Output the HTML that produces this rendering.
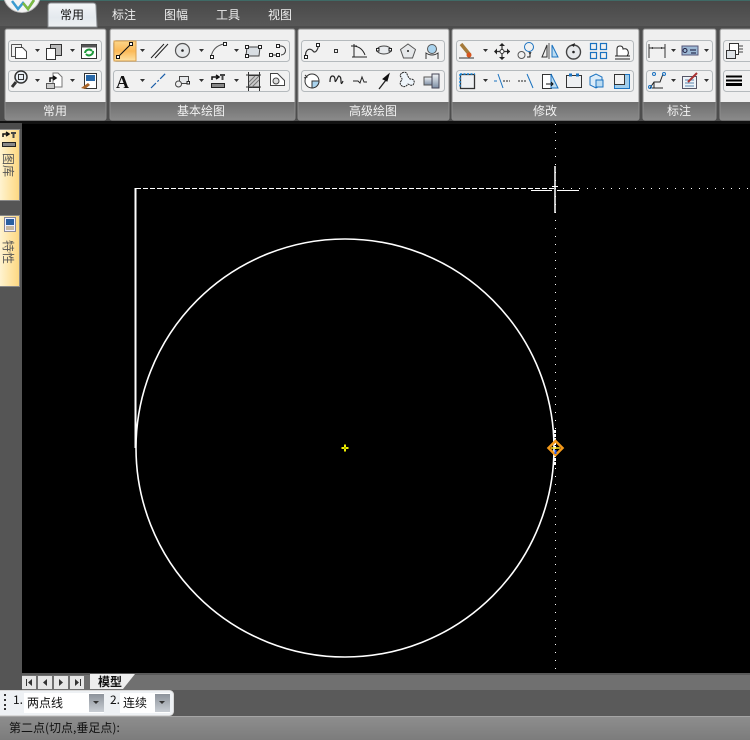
<!DOCTYPE html>
<html><head><meta charset="utf-8">
<style>
html,body{margin:0;padding:0;background:#000;width:750px;height:740px;overflow:hidden}
svg{display:block}
text{font-family:"WenQuanYi Zen Hei","Noto Sans CJK SC","Liberation Sans",sans-serif;font-size:12px}
.k{fill:none;stroke:#222;stroke-width:1}
.b{fill:none;stroke:#1a72c0;stroke-width:1.200}
.g{fill:none;stroke:#555;stroke-width:1}
.s{fill:#fff;stroke:#222;stroke-width:1}
.arr{fill:#333}
</style></head><body>
<svg width="750" height="740" viewBox="0 0 750 740" xmlns="http://www.w3.org/2000/svg">
<defs>
<linearGradient id="top" x1="0" y1="0" x2="0" y2="1"><stop offset="0" stop-color="#484848"/><stop offset="1" stop-color="#585858"/></linearGradient>
<linearGradient id="tab" x1="0" y1="0" x2="0" y2="1"><stop offset="0" stop-color="#f4f6f8"/><stop offset=".6" stop-color="#e4e9ee"/><stop offset="1" stop-color="#eef1f3"/></linearGradient>
<linearGradient id="lab" x1="0" y1="0" x2="0" y2="1"><stop offset="0" stop-color="#6e6e6e"/><stop offset="1" stop-color="#8a8a8a"/></linearGradient>
<linearGradient id="hot" x1="0" y1="0" x2="0" y2="1"><stop offset="0" stop-color="#fbd58a"/><stop offset=".5" stop-color="#fbb957"/><stop offset="1" stop-color="#fde3a6"/></linearGradient>
<linearGradient id="yel" x1="0" y1="0" x2="1" y2="0"><stop offset="0" stop-color="#fff6d8"/><stop offset="1" stop-color="#fdd77f"/></linearGradient>
<linearGradient id="st" x1="0" y1="0" x2="0" y2="1"><stop offset="0" stop-color="#8e8e8e"/><stop offset="1" stop-color="#7c7c7c"/></linearGradient>
<linearGradient id="btn" x1="0" y1="0" x2="0" y2="1"><stop offset="0" stop-color="#8d939b"/><stop offset="1" stop-color="#c9ced4"/></linearGradient>
<linearGradient id="cyl" x1="0" y1="0" x2="0" y2="1"><stop offset="0" stop-color="#f2f5f8"/><stop offset="1" stop-color="#7d8ea4"/></linearGradient>
</defs>

<!-- ribbon background -->
<rect x="0" y="0" width="750" height="123" fill="#2f2f2f"/>
<rect x="0" y="0" width="750" height="26" fill="url(#top)"/>
<rect x="0" y="0" width="750" height="1" fill="#3f6a66"/>
<rect x="0" y="26" width="750" height="95" fill="#4d4d4d"/>
<rect x="0" y="121" width="750" height="3" fill="#111"/>

<!-- logo -->
<circle cx="22" cy="-6" r="18.500" fill="#f4f4f4" stroke="#bbb"/>
<path d="M12 1 L18 9 L23 3 L28 9 L34 0" fill="none" stroke="#3b9bd0" stroke-width="2.500"/>
<path d="M23 3 L28 9 L34 0" fill="none" stroke="#7db940" stroke-width="2.500"/>

<!-- tabs -->
<path d="M48 27 L48 6 Q48 3 51 3 L93 3 Q96 3 96 6 L97 27 Z" fill="url(#tab)" stroke="#8b8f93"/>
<text x="60" y="19" fill="#111">常用</text>
<text x="112" y="19" fill="#eee">标注</text>
<text x="164" y="19" fill="#eee">图幅</text>
<text x="216" y="19" fill="#eee">工具</text>
<text x="268" y="19" fill="#eee">视图</text>

<!-- panels -->
<g>
<rect x="5" y="29" width="101" height="91" rx="2" fill="#efefef" stroke="#8c8c8c"/><rect x="5.500" y="102" width="100" height="18" fill="url(#lab)"/>
<rect x="110" y="29" width="185" height="91" rx="2" fill="#efefef" stroke="#8c8c8c"/><rect x="110.500" y="102" width="184" height="18" fill="url(#lab)"/>
<rect x="298" y="29" width="151" height="91" rx="2" fill="#efefef" stroke="#8c8c8c"/><rect x="298.500" y="102" width="150" height="18" fill="url(#lab)"/>
<rect x="452" y="29" width="187" height="91" rx="2" fill="#efefef" stroke="#8c8c8c"/><rect x="452.500" y="102" width="186" height="18" fill="url(#lab)"/>
<rect x="643" y="29" width="73" height="91" rx="2" fill="#efefef" stroke="#8c8c8c"/><rect x="643.500" y="102" width="72" height="18" fill="url(#lab)"/>
<rect x="720" y="29" width="40" height="91" rx="2" fill="#efefef" stroke="#8c8c8c"/><rect x="720.500" y="102" width="40" height="18" fill="url(#lab)"/>
</g>
<g fill="#f2f2f2">
<text x="43" y="115">常用</text>
<text x="177" y="115">基本绘图</text>
<text x="349" y="115">高级绘图</text>
<text x="533" y="115">修改</text>
<text x="667" y="115">标注</text>
</g>

<!-- button groups -->
<g fill="#f1f1f1" stroke="#b5babd">
<rect x="8.500" y="40.500" width="93" height="21" rx="3"/><rect x="8.500" y="70.500" width="93" height="21" rx="3"/>
<rect x="113.500" y="40.500" width="176" height="21" rx="3"/><rect x="113.500" y="70.500" width="176" height="21" rx="3"/>
<rect x="301.500" y="40.500" width="143" height="21" rx="3"/><rect x="301.500" y="70.500" width="143" height="21" rx="3"/>
<rect x="456.500" y="40.500" width="177" height="21" rx="3"/><rect x="456.500" y="70.500" width="177" height="21" rx="3"/>
<rect x="646.500" y="40.500" width="66" height="21" rx="3"/><rect x="646.500" y="70.500" width="66" height="21" rx="3"/>
<rect x="723.500" y="40.500" width="40" height="21" rx="3"/><rect x="723.500" y="70.500" width="40" height="21" rx="3"/>
</g>
<!-- dropdown arrows -->
<g class="arr">
<path d="M35 49h5l-2.500 3z"/><path d="M70 49h5l-2.500 3z"/><path d="M35 79h5l-2.500 3z"/><path d="M70 79h5l-2.500 3z"/>
<path d="M140 49h5l-2.500 3z"/><path d="M199 49h5l-2.500 3z"/><path d="M234 49h5l-2.500 3z"/>
<path d="M140 79h5l-2.500 3z"/><path d="M199 79h5l-2.500 3z"/><path d="M234 79h5l-2.500 3z"/>
<path d="M483 49h5l-2.500 3z"/><path d="M483 79h5l-2.500 3z"/>
<path d="M671 49h5l-2.500 3z"/><path d="M704 49h5l-2.500 3z"/><path d="M671 79h5l-2.500 3z"/><path d="M704 79h5l-2.500 3z"/>
</g>

<!-- panel 1 icons -->
<path class="g" d="M11.500 44.500h10v3M11.500 44.500v12h4"/><path d="M15.500 47.500h7l4 4v7h-11z" fill="#fff" stroke="#444"/>
<path d="M46.500 48.500h9v11h-9z" fill="#fff" stroke="#333"/><path d="M50.500 44.500h11v11h-6v-7h-5z" fill="#bbb" stroke="#333"/>
<rect x="81.500" y="44.500" width="15" height="14" fill="#fff" stroke="#333"/><rect x="81.500" y="44.500" width="15" height="3" fill="#555"/><path d="M85 53a4 4 0 0 1 7-2M93 51a4 4 0 0 1-7 3" fill="none" stroke="#1e9a3a" stroke-width="2"/>
<circle cx="21" cy="77" r="6" fill="#e8eef4" stroke="#333" stroke-width="1.500"/><rect x="18.500" y="74.500" width="5" height="5" fill="none" stroke="#333"/><path d="M16 82l-4 5" stroke="#333" stroke-width="3"/>
<path d="M53 73h5l4 4v10h-9z" fill="#fff" stroke="#777"/><rect x="46.500" y="83.500" width="8" height="5" fill="#ccc" stroke="#555"/><path d="M50 82v-4h5M53 76l3 2-3 2" fill="none" stroke="#111" stroke-width="1.500"/>
<rect x="84.500" y="73.500" width="12" height="15" fill="#fff" stroke="#333"/><rect x="86" y="75" width="9" height="6" fill="#2868a8"/><path d="M81 88l7-5 2 2-5 4z" fill="#a86428"/>

<!-- panel 2 icons row 1 -->
<rect x="114" y="41" width="22" height="20" fill="url(#hot)" stroke="#d9a04f"/>
<path d="M118 57L131 44" stroke="#111"/><rect x="116.500" y="55.500" width="3" height="3" fill="#fff" stroke="#111"/><rect x="129.500" y="42.500" width="3" height="3" fill="#fff" stroke="#111"/>
<path d="M151 58L164 44M155 58L168 44" stroke="#222" fill="none"/>
<circle cx="182.500" cy="50.500" r="7" fill="#e6e8ea" stroke="#555" stroke-width="1.200"/><circle cx="182.500" cy="50.500" r="1.300" fill="#222"/>
<path d="M211 57Q213 46 224 44" fill="none" stroke="#555"/><rect x="210.500" y="55.500" width="3" height="3" class="s"/><rect x="223.500" y="42.500" width="3" height="3" class="s"/>
<path d="M247 47h13l-1 9h-13z" fill="#d8dde2" stroke="#444"/><rect x="245.500" y="45.500" width="3" height="3" class="s"/><rect x="258.500" y="45.500" width="3" height="3" class="s"/><rect x="245.500" y="54.500" width="3" height="3" class="s"/>
<path d="M271 55h8M279 46h2a4.500 4.500 0 0 1 0 9" fill="none" stroke="#333"/><rect x="269.500" y="53.500" width="3" height="3" class="s"/><rect x="276.500" y="53.500" width="3" height="3" class="s"/><rect x="276.500" y="44.500" width="3" height="3" class="s"/>
<!-- row 2 -->
<text x="116" y="88" style="font-family:'Liberation Serif',serif;font-size:18px;font-weight:bold" fill="#111">A</text>
<path d="M151 88L166 73" stroke="#1a5da8" stroke-width="1.200" stroke-dasharray="7 2 2 2"/>
<rect x="179.500" y="76.500" width="9" height="7" fill="#e6e8ea" stroke="#444"/><circle cx="178.500" cy="84" r="3" fill="#eee" stroke="#444"/><rect x="187" y="81.500" width="2.500" height="2.500" class="s"/>
<path d="M212 80v-3h6M216 75l3 2-3 2" fill="none" stroke="#111" stroke-width="1.500"/><path d="M220 75h5M222.500 75v5" stroke="#444" stroke-width="2"/><rect x="211.500" y="83.500" width="13" height="4" fill="#888" stroke="#222"/>
<rect x="248.500" y="75.500" width="11" height="12" fill="#ccc" stroke="#333"/><path d="M246 75h15M246 87h15M248.500 72v19M259.500 72v19" stroke="#333"/><path d="M249 82l6-6M252 87l7-7M249 86l10-10" stroke="#777"/>
<path d="M270.500 73.500h7l7 7v5h-14z" fill="#fff" stroke="#444"/><circle cx="276" cy="81" r="3" fill="#ddd" stroke="#444"/>

<!-- panel 3 icons row 1 -->
<path d="M305.500 57C305 48 311 48 313 51C315 54 318 50 318.500 45" fill="none" stroke="#333" stroke-width="1.200"/><rect x="304.500" y="55.500" width="3" height="3" class="s"/><rect x="316.500" y="43.500" width="3" height="3" class="s"/>
<rect x="334.500" y="49.500" width="3" height="3" fill="none" stroke="#333"/>
<path d="M354 44v13h13M354 46Q362 47 365 55" fill="none" stroke="#222"/><path d="M351 46h6M352 57h3" stroke="#222"/>
<ellipse cx="384" cy="50" rx="7" ry="4" fill="#e8ebee" stroke="#444"/><rect x="376.500" y="48.500" width="2.500" height="2.500" class="s"/><rect x="389" y="48.500" width="2.500" height="2.500" class="s"/>
<path d="M408 44l7.500 5.500-3 8.500h-9l-3-8.500z" fill="#e6e8ea" stroke="#555"/><circle cx="408" cy="51" r="1" fill="#222"/>
<circle cx="432" cy="49" r="4.500" fill="#a9d3ee" stroke="#555"/><path d="M426 59v-6q3 2 6 2t6-2v6" fill="none" stroke="#333"/>
<!-- row 2 -->
<circle cx="312" cy="81" r="7" fill="#fff" stroke="#333"/><path d="M312 81h7a7 7 0 0 1-7 7z" fill="#a9d3ee" stroke="#333"/><path d="M305 75l2 2-3 1" fill="none" stroke="#333"/>
<path d="M330 82q0-6 2.500-6t2.500 4q0 3 1.500 0t2-4q2.500 0 2.500 5t2 0" fill="none" stroke="#222" stroke-width="1.200"/>
<path d="M353 81h5l2 2 2-6 2 5h3" fill="none" stroke="#222"/>
<path d="M379 89L386 80" stroke="#222" stroke-width="1.300"/><path d="M383 79l6-5-2 7z" fill="#111" stroke="#111"/>
<path d="M402 73q4-2 5 1t3 5q5 0 4 4t-6 1q-3 4-6 2t-1-5q2-2 0-4t1-4z" fill="#eef5fb" stroke="#222" stroke-dasharray="2 .7"/>
<path d="M424 77h8v8h-8z" fill="url(#cyl)" stroke="#555"/><path d="M432 74h7v14h-7z" fill="url(#cyl)" stroke="#445"/>

<!-- panel 4 icons row 1 -->
<path d="M461 44l9 11" stroke="#a57a3a" stroke-width="3.500"/><circle cx="469" cy="55" r="2.500" fill="#d9541c"/><path d="M459 58h15" stroke="#333"/>
<path d="M502 44v15M495 51.500h15" stroke="#333" stroke-width="1.200"/><path d="M502 43l-3 3h6zM502 60l-3-3h6zM494 51.500l3-3v6zM510 51.500l-3-3v6z" fill="#222"/><circle cx="502" cy="51.500" r="2" fill="#fff" stroke="#333"/>
<circle cx="529" cy="47" r="4.500" fill="none" stroke="#1a72c0"/><circle cx="521.500" cy="55" r="3.500" fill="none" stroke="#555"/><path d="M527 57h3v-3M529 52l1 2 1-2" fill="none" stroke="#222"/>
<path d="M549 43v16" stroke="#555"/><path d="M547 45v12h-5z" fill="none" stroke="#333"/><path d="M552 45l6 12h-6z" fill="#bcdcf2" stroke="#1a72c0"/>
<circle cx="573.500" cy="52" r="7" fill="#e6e8ea" stroke="#444" stroke-width="1.400"/><circle cx="573.500" cy="52" r="1.300" fill="#222"/><path d="M571 45l4-2-1 4z" fill="#222"/>
<g class="b"><rect x="590.500" y="43.500" width="6" height="6"/><rect x="600.500" y="43.500" width="6" height="6"/></g><g fill="none" stroke="#1a72c0" stroke-width="1.200"><rect x="590.500" y="52.500" width="6" height="6"/><rect x="600.500" y="52.500" width="6" height="6"/></g>
<path d="M617 56v-7q0-3 3-3t3 3q4-1 5 2t-1 5z" fill="#fff" stroke="#222"/><path d="M615 56h15M615 59h15" stroke="#222"/>
<!-- row 2 -->
<rect x="460.500" y="74.500" width="14" height="14" fill="#eef0f2" stroke="#333" stroke-width="1.300"/><path d="M460 74h15M460 74v14" stroke="#1a8be0" stroke-width="1.500" stroke-dasharray="2 1.500"/>
<path d="M494 81h3M498 74l5 14" stroke="#1a72c0" fill="none"/><path d="M503 81h7" stroke="#222" stroke-dasharray="2 1"/>
<path d="M518 81h8" stroke="#222" stroke-dasharray="2 1"/><path d="M527 74l6 14" stroke="#1a72c0"/>
<path d="M542.500 74.500h9v14h-9z" fill="#fff" stroke="#333"/><path d="M551 74l7 14h-7z" fill="#bcdcf2" stroke="#1a72c0"/><path d="M546 84h7M551 82l2 2-2 2" fill="none" stroke="#111"/>
<rect x="566.500" y="75.500" width="15" height="12" fill="#eef0f2" stroke="#333"/><rect x="569" y="73.500" width="3" height="3" fill="#1a72c0"/><rect x="576" y="73.500" width="3" height="3" fill="#1a72c0"/>
<path d="M590 77l6-3 6 3v8l-6 3-6-3z" fill="#dcecf8" stroke="#1a72c0"/><path d="M596 80l7 0v7h-7z" fill="#bcdcf2" stroke="#1a72c0"/>
<rect x="614.500" y="74.500" width="15" height="14" fill="#9fcdec" stroke="#1a72c0"/><rect x="614.500" y="74.500" width="10" height="10" fill="#f2f2f2" stroke="#333"/>

<!-- panel 5 icons -->
<path d="M649 44v14M665 44v14M649 48h16" stroke="#333" fill="none"/><path d="M650 48l3-1v2zM664 48l-3-1v2z" fill="#222"/>
<rect x="682" y="46" width="16" height="9" fill="#9cb8d4" stroke="#557"/><circle cx="685" cy="50.500" r="2" fill="none" stroke="#224"/><path d="M690 50h6M691 53h5" stroke="#113"/>
<path d="M650 88l4-6h6l3-8M652 88h11M654 82v6" fill="none" stroke="#222"/><circle cx="654" cy="74" r="1.500" fill="none" stroke="#1a72c0"/><circle cx="650" cy="87" r="1.500" fill="none" stroke="#1a72c0"/><circle cx="664" cy="74" r="1.500" fill="none" stroke="#1a72c0"/>
<rect x="682.500" y="76.500" width="14" height="12" fill="#eef3f8" stroke="#556"/><path d="M685 80h9M685 83h9M685 86h9" stroke="#5a87b0"/><path d="M688 82l9-9" stroke="#a33" stroke-width="2"/>

<!-- panel 6 icons -->
<rect x="729.500" y="43.500" width="9" height="11" fill="#fff" stroke="#333"/><rect x="726.500" y="50.500" width="9" height="8" fill="#dfe3e7" stroke="#333"/><path d="M738 46h5M738 49h5M738 52h5" stroke="#444"/>
<path d="M726 76.500h16M726 80.500h16" stroke="#000" stroke-width="2"/><path d="M726 84.500h16" stroke="#000" stroke-width="3"/>

<!-- left sidebar -->
<rect x="0" y="123" width="22" height="550" fill="#555"/>
<rect x="0" y="123" width="22" height="6" fill="#4c4c4c"/>
<rect x="-2" y="129.500" width="21.500" height="71" fill="url(#yel)" stroke="#888"/>
<rect x="-2" y="215.500" width="21.500" height="71" fill="url(#yel)" stroke="#888"/>
<path d="M3 137v-3h5M6 132l3 2-3 2" fill="none" stroke="#111" stroke-width="1.500"/><path d="M11 133h5M13.500 133v5" stroke="#444" stroke-width="2"/><rect x="2.500" y="142.500" width="13" height="4" fill="#888" stroke="#222"/>
<rect x="4.500" y="217.500" width="11" height="14" fill="#eef" stroke="#889"/><rect x="6" y="219" width="8" height="6" fill="#2a5fa0"/><path d="M6 227h8M6 229h8" stroke="#a08040"/>
<text transform="translate(4 153) rotate(90)" fill="#555" style="font-size:12px">图库</text>
<text transform="translate(4 240) rotate(90)" fill="#555" style="font-size:12px">特性</text>

<!-- canvas -->
<rect x="22" y="124" width="728" height="549" fill="#000"/>
<circle cx="345" cy="448" r="209" fill="none" stroke="#fff" stroke-width="1.600"/>
<path d="M135.500 188V448" stroke="#fff" stroke-width="2"/>
<path d="M136 188.500H555" stroke="#fff" stroke-dasharray="5 2"/>
<path d="M555 188.500H750" stroke="#fff" stroke-dasharray="1 7"/>
<path d="M555.500 124V672" stroke="#fff" stroke-dasharray="1 7"/>
<path d="M555 166V213" stroke="#fff" stroke-width="1.500"/>
<path d="M531 190.500H552M557 190.500H579" stroke="#fff" stroke-width="1"/>
<path d="M552 186.500h6" stroke="#fff"/>
<path d="M555 430V466" stroke="#fff" stroke-width="2" stroke-dasharray="3 1"/>
<path d="M555.500 441l7 7-7 7-7-7z" fill="none" stroke="#f59a1a" stroke-width="2.500"/>
<path d="M551 448h9" stroke="#ffe020" stroke-width="1.500"/>
<path d="M555.500 450v4" stroke="#2a5ff0" stroke-width="2"/>
<path d="M345 444.500v7M341.500 448h7" stroke="#f0f000" stroke-width="2"/><rect x="344.500" y="447.500" width="1" height="1" fill="#000"/>

<!-- bottom tab strip -->
<rect x="0" y="673" width="750" height="17" fill="#707070"/>
<rect x="0" y="673" width="22" height="17" fill="#555"/>
<rect x="22" y="673" width="728" height="2" fill="#5a5a5a"/>
<g fill="#e6e6e6"><rect x="22" y="676" width="14" height="13"/><rect x="38" y="676" width="14" height="13"/><rect x="54" y="676" width="14" height="13"/><rect x="70" y="676" width="14" height="13"/></g>
<g fill="#333"><path d="M26 679h1v7h-1zM32 679v7l-4-3.500z"/><path d="M47 679v7l-4-3.500z"/><path d="M59 679v7l4-3.500z"/><path d="M75 679v7l4-3.500zM80 679h1v7h-1z"/></g>
<path d="M90 674H135L123 689H90z" fill="#eee"/>
<text x="98" y="686" fill="#111" style="font-weight:bold;font-size:12px">模型</text>

<!-- toolbar row -->
<rect x="0" y="690" width="750" height="26" fill="#5a5a5a"/>
<rect x="-4" y="690.500" width="177.500" height="25" rx="4" fill="#eef1f4" stroke="#d8d8d8"/>
<g fill="#333"><rect x="4" y="694" width="2" height="2"/><rect x="4" y="699" width="2" height="2"/><rect x="4" y="704" width="2" height="2"/><rect x="4" y="708" width="2" height="2"/></g>
<text x="13" y="704" fill="#111">1.</text>
<rect x="24" y="693" width="80" height="20" fill="#fff"/>
<text x="27" y="707" fill="#111">两点线</text>
<rect x="89" y="694" width="15" height="18" fill="url(#btn)"/><path d="M93 701h6l-3 3z" fill="#333"/>
<text x="110" y="704" fill="#111">2.</text>
<rect x="120" y="693" width="50" height="20" fill="#fff"/>
<text x="123" y="707" fill="#111">连续</text>
<rect x="155" y="694" width="15" height="18" fill="url(#btn)"/><path d="M159 701h6l-3 3z" fill="#333"/>

<!-- status bar -->
<rect x="0" y="716" width="750" height="24" fill="url(#st)"/>
<rect x="0" y="716" width="750" height="1" fill="#a5a5a5"/>
<text x="9" y="732" fill="#111">第二点(切点,垂足点):</text>
</svg>
</body></html>
